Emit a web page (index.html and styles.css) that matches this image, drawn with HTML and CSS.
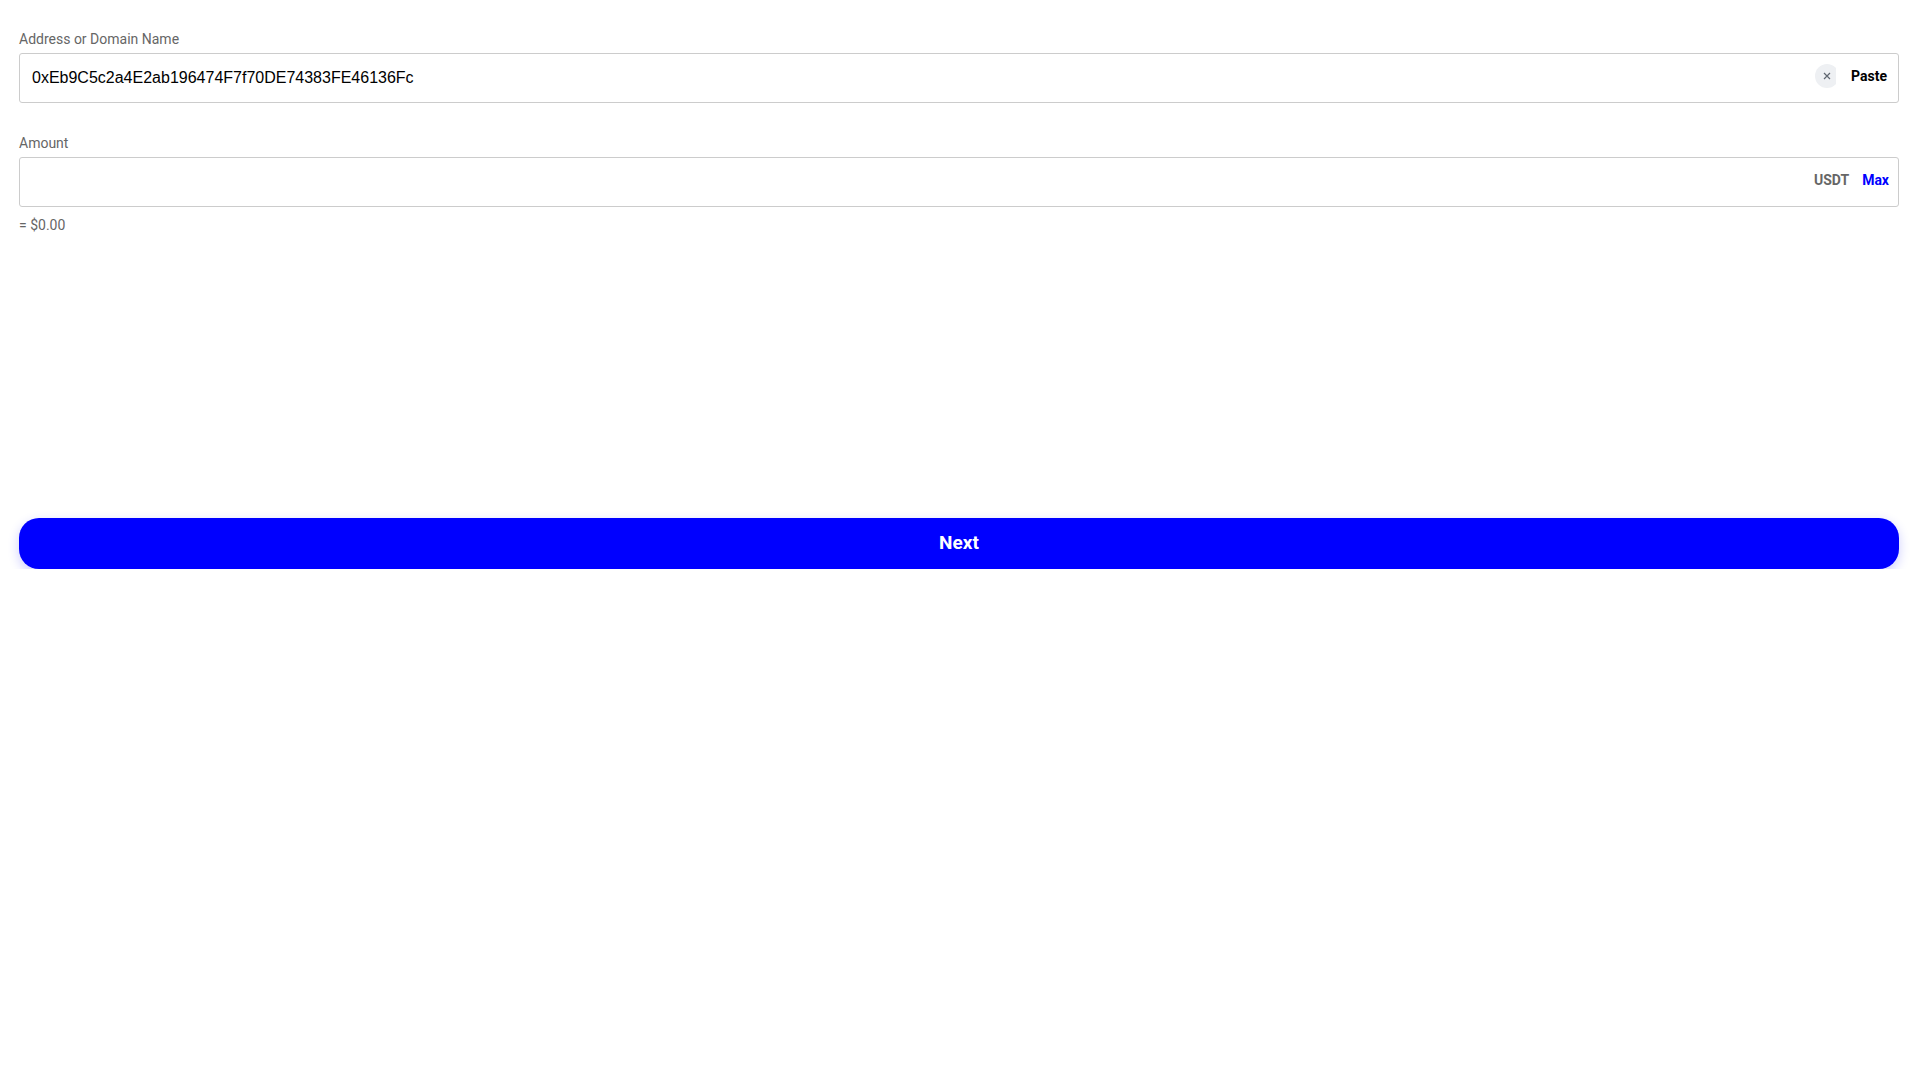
FILE: index.html
```html
<!DOCTYPE html>
<html lang="en">
<head>
    <meta charset="UTF-8">
    <meta name="viewport" content="width=device-width, initial-scale=1.0">
    <title>Send</title>

    <link rel="stylesheet" href="styles.css">
</head>
<body>
    <form class="send-form">
        <div class="field">
            <label class="field-label" for="address">Address or Domain Name</label>
            <div class="input-box">
                <input type="text" id="address" class="text-input" value="0xEb9C5c2a4E2ab196474F7f70DE74383FE46136Fc">
                <button type="button" class="clear-button">
                    <svg width="8" height="8" viewBox="0 0 8 8"><path d="M1 1L7 7M7 1L1 7" stroke="#5f6670" stroke-width="1.2" fill="none"/></svg>
                </button>
                <button type="button" class="paste-button">Paste</button>
            </div>
        </div>

        <div class="field amount-field">
            <label class="field-label" for="amount">Amount</label>
            <div class="input-box amount-box">
                <input type="text" id="amount" class="text-input">
                <span class="unit">USDT</span>
                <button type="button" class="max-button">Max</button>
            </div>
            <p class="fiat-value">= $0.00</p>
        </div>

        <button type="submit" class="next-button">Next</button>
    </form>
</body>
</html>
```

FILE: styles.css
```css
* {
    box-sizing: border-box;
}

body {
    margin: 0;
    background-color: #fff;
    font-family: Roboto, sans-serif;
}

.send-form {
    display: flex;
    flex-direction: column;
    padding: 31px 19px 0;
}

.field-label {
    display: block;
    height: 16px;
    margin-bottom: 6px;

    font-size: 14px;
    line-height: 16px;
    color: #666;
}

.amount-field {
    margin-top: 32px;
}

.input-box {
    display: flex;
    align-items: center;

    height: 50px;
    padding: 0 11px 0 12px;

    border: 1px solid #ccc;
    border-radius: 3px;
}

.amount-box {
    padding-right: 9px;
}

.text-input {
    flex: 1;
    min-width: 0;
    padding: 0;

    border: none;
    outline: none;

    font-family: "Liberation Sans", Arial, sans-serif;
    font-size: 16px;
    color: #000;
}

.clear-button {
    display: flex;
    justify-content: center;
    align-items: center;

    width: 24px;
    height: 24px;
    padding: 0;
    margin-top: -4px;

    background-color: #eef0f3;
    border: none;
    border-radius: 50%;
    clip-path: inset(0 3px 0 0);
}

.paste-button,
.max-button {
    padding: 0;
    margin-top: -4px;

    background: none;
    border: none;

    font-family: Roboto, sans-serif;
    font-size: 14px;
    font-weight: 700;
}

.paste-button {
    margin-left: 12px;
    color: #000;
}

.unit {
    margin-top: -4px;

    font-size: 14px;
    font-weight: 700;
    color: #666;
}

.max-button {
    margin-left: 13px;
    color: #00f;
}

.fiat-value {
    margin: 10px 0 0;

    font-size: 14px;
    line-height: 16px;
    color: #666;
}

.next-button {
    height: 51px;
    margin-top: 285px;
    padding: 0 0 2px;

    background-color: #00f;
    color: #fff;

    border: none;
    border-radius: 20px;
    box-shadow: 0 4px 12px rgba(0, 0, 255, 0.2);

    font-family: Roboto, sans-serif;
    font-size: 19px;
    font-weight: 700;
}
```
